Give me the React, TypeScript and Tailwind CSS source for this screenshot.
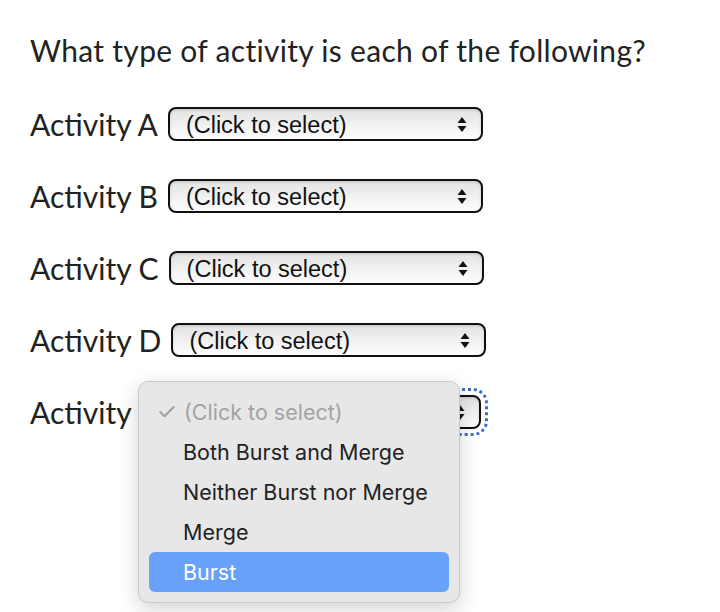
import { Check } from "lucide-react";

const rows = ["A", "B", "C", "D", "E"];

const options = ["Both Burst and Merge", "Neither Burst nor Merge", "Merge", "Burst"];

function FakeSelect({ focused }: { focused?: boolean }) {
  return (
    <div
      className={
        "relative ml-[10px] flex h-[34px] w-[315px] items-center rounded-[8px] border-2 border-[#111] bg-[linear-gradient(#e3e3e3,#fdfdfd)] pl-[16px] pr-[14px] shadow-[inset_0_1px_3px_rgba(0,0,0,0.15)] " +
        (focused ? "outline-[3px] outline-dotted outline-offset-[4px] outline-[#3a6fc4]" : "")
      }
    >
      <span className="flex-1 pt-[3px] font-['Liberation_Sans',Arial,sans-serif] text-[23.5px] leading-none text-[#111]">
        (Click to select)
      </span>
      <svg width="10" height="17" viewBox="0 0 10 17" className="shrink-0">
        <path d="M5 1 L9.5 7 L0.5 7 Z" fill="#111" />
        <path d="M5 16 L9.5 10 L0.5 10 Z" fill="#111" />
      </svg>
    </div>
  );
}

export default function App() {
  return (
    <div className="relative min-h-[612px] bg-white pl-[30px] pt-[28px] font-['Lato','Open_Sans',sans-serif] text-[#222]">
      <h1 className="text-[30px] leading-[44px] tracking-[0.3px]">What type of activity is each of the following?</h1>

      <div className="mt-[35px] flex flex-col gap-[38px]">
        {rows.map((r) => (
          <div key={r} className="flex items-center">
            <span className="text-[30px] leading-[34px]">Activity {r}</span>
            <FakeSelect focused={r === "E"} />
          </div>
        ))}
      </div>

      {/* open dropdown menu */}
      <div className="absolute left-[138px] top-[381px] w-[322px] rounded-[10px] border border-[#c9c9c9] bg-[#e7e7e7] px-[10px] py-[10px] shadow-[0_6px_20px_rgba(0,0,0,0.18)] font-['Inter','Roboto',sans-serif] text-[21.5px]">
        <div className="flex h-[40px] items-center text-[#a3a3a3]">
          <Check size={20} strokeWidth={2.6} className="ml-[8px] mr-[7px]" />
          <span>(Click to select)</span>
        </div>
        {options.map((o) => (
          <div
            key={o}
            className={
              "flex h-[40px] items-center rounded-[6px] pl-[34px] " +
              (o === "Burst" ? "bg-[#68a2f8] text-white" : "text-[#222]")
            }
          >
            {o}
          </div>
        ))}
      </div>
    </div>
  );
}
